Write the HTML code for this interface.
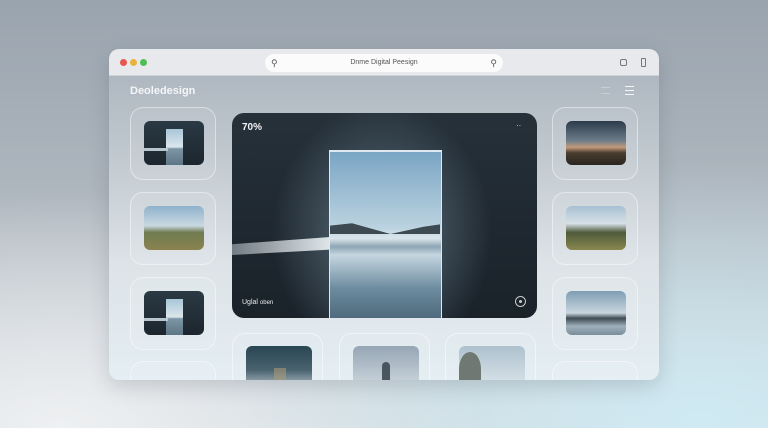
<!DOCTYPE html>
<html><head><style>
*{margin:0;padding:0;box-sizing:border-box}
body{width:768px;height:428px;overflow:hidden;position:relative;font-family:"Liberation Sans",sans-serif;
background:radial-gradient(ellipse 500px 260px at 700px 420px,#cfeaf3 0%,rgba(207,234,243,0) 100%),radial-gradient(ellipse 420px 240px at 60px 430px,#eef0f2 0%,rgba(238,240,242,0) 100%),linear-gradient(180deg,#9aa4ae 0%,#aeb6be 45%,#d4dade 100%);}
.win{position:absolute;left:109px;top:49px;width:550px;height:331px;border-radius:10px;overflow:hidden;box-shadow:0 6px 20px rgba(60,70,80,.2);
background:linear-gradient(180deg,#a9b2bb 0%,#bfc7ce 30%,#dde3e7 65%,#e4eef3 100%);}
.bar{position:absolute;left:0;top:0;width:100%;height:27px;background:#e7e9ec;border-bottom:1px solid #d0d4d8}
.dot{position:absolute;top:10px;width:7px;height:7px;border-radius:50%}
.url{position:absolute;left:156px;top:5px;width:238px;height:18px;border-radius:9px;background:#fbfbfc;font-size:7px;color:#555;text-align:center;line-height:18px}
.logo{position:absolute;left:21px;top:36px;color:#f4f6f8;font-size:11px;font-weight:bold}
.card{position:absolute;width:86px;height:73px;border-radius:13px;border:1.5px solid rgba(255,255,255,.45);background:rgba(255,255,255,.08)}
.th{position:absolute;left:13px;top:13px;width:60px;height:44px;border-radius:6px;overflow:hidden}
.door{position:absolute;left:22px;top:8px;width:17px;height:36px;background:linear-gradient(180deg,#a9c6d8 0%,#dbe6ec 50%,#7c95a5 55%,#5d7686 100%)}
.main{position:absolute;left:123px;top:64px;width:305px;height:205px;border-radius:12px;overflow:hidden;
background:radial-gradient(ellipse 110px 130px at 150px 120px,#5f7482 0%,rgba(40,52,62,0) 100%),linear-gradient(180deg,#26313a 0%,#1f2830 55%,#1a222a 100%)}
.bc{position:absolute;top:284px;width:91px;height:60px;border-radius:13px;border:1.5px solid rgba(255,255,255,.5)}
.bt{position:absolute;left:13px;top:12px;width:66px;height:40px;border-radius:6px;overflow:hidden}
</style></head><body>
<div class="win">
 <div class="bar">
  <div class="dot" style="left:11px;background:#e8574f"></div>
  <div class="dot" style="left:21px;background:#e9b33c"></div>
  <div class="dot" style="left:31px;background:#4fbf55"></div>
  <div class="url"><span style="position:absolute;left:6px;top:0;font-size:9px">⚲</span>Dnme Digital Peesign<span style="position:absolute;right:6px;top:0;font-size:9px">⚲</span></div>
  <div style="position:absolute;left:511px;top:10px;width:7px;height:7px;border:1px solid #777;border-radius:2px"></div>
  <div style="position:absolute;left:532px;top:9px;width:5px;height:9px;border:1px solid #777;border-radius:1px"></div>
 </div>
 <div class="logo">Deoledesign</div>
 <div style="position:absolute;left:492px;top:38px;width:9px;height:7px;border-top:1px solid #c8ced4;border-bottom:1px solid #c8ced4"></div>
 <div style="position:absolute;left:516px;top:37px;width:9px;height:9px;border-top:1.5px solid #f4f6f8;border-bottom:1.5px solid #f4f6f8"><div style="margin-top:2.5px;height:1.5px;background:#f4f6f8"></div></div>

 <div class="card" style="left:21px;top:58px"><div class="th" style="background:linear-gradient(180deg,#2a3944,#1d262e)"><div class="door"></div><div style="position:absolute;left:0;top:27px;width:24px;height:3px;background:#b8c6cf"></div></div></div>
 <div class="card" style="left:21px;top:143px"><div class="th" style="background:linear-gradient(180deg,#8fb2cc 0%,#c9d8e0 45%,#6f7b4f 60%,#8b8350 100%)"></div></div>
 <div class="card" style="left:21px;top:228px"><div class="th" style="background:linear-gradient(180deg,#2a3944,#1d262e)"><div class="door"></div><div style="position:absolute;left:0;top:27px;width:24px;height:3px;background:#b8c6cf"></div></div></div>
 <div class="card" style="left:21px;top:312px"></div>

 <div class="card" style="left:443px;top:58px"><div class="th" style="background:linear-gradient(180deg,#2c3b4b 0%,#6d7d8a 45%,#c29a7a 60%,#4a3d30 72%,#2a2520 100%)"></div></div>
 <div class="card" style="left:443px;top:143px"><div class="th" style="background:linear-gradient(180deg,#a7c0d2 0%,#d6e0e6 40%,#4f5a3a 60%,#8a8850 100%)"></div></div>
 <div class="card" style="left:443px;top:228px"><div class="th" style="background:linear-gradient(180deg,#7f9db3 0%,#c9d6de 50%,#404b52 62%,#9fb0bc 80%,#7a8e9a 100%)"></div></div>
 <div class="card" style="left:443px;top:312px"></div>

 <div class="main">
  <div style="position:absolute;left:0;top:124px;width:98px;height:18px;background:linear-gradient(90deg,rgba(200,210,218,.5),rgba(240,245,248,.9));clip-path:polygon(0 40%,100% 0,100% 70%,0 100%)"></div>
  <div style="position:absolute;left:97px;top:37px;width:113px;height:168px;background:linear-gradient(180deg,#7aa5c4 0%,#bcd3e0 46%,#dbe6ec 52%,#8ea6b4 57%,#c5d6e0 62%,#6d8ca0 82%,#4f6a7c 100%);border:1.5px solid #dfe8ee;border-bottom:none;border-top-width:2px">
   <div style="position:absolute;left:0;top:70px;width:110px;height:12px;background:#3d4a52;clip-path:polygon(0 30%,20% 10%,55% 100%,85% 40%,100% 20%,100% 100%,0 100%)"></div>
  </div>
  <div style="position:absolute;left:10px;top:9px;color:#f2f4f6;font-size:10px;font-weight:bold">70%</div>
  <div style="position:absolute;left:284px;top:8px;color:#ddd;font-size:8px">··</div>
  <div style="position:absolute;left:10px;top:186px;color:#e8ecef;font-size:7px">Uglal <span style="font-size:6px">oben</span></div>
  <div style="position:absolute;left:283px;top:183px;width:11px;height:11px;border:1px solid #ccc;border-radius:50%"><div style="width:3px;height:3px;background:#ccc;border-radius:50%;margin:3px"></div></div>
 </div>

 <div class="bc" style="left:123px"><div class="bt" style="background:linear-gradient(180deg,#294653,#49626e 60%,#a8b8bf)"><div style="position:absolute;left:28px;top:22px;width:12px;height:18px;background:#a89878;opacity:.6"></div></div></div>
 <div class="bc" style="left:230px"><div class="bt" style="background:linear-gradient(180deg,#96a6b4,#cbd5dc)"><div style="position:absolute;left:29px;top:16px;width:8px;height:24px;background:#4a5560;border-radius:4px 4px 0 0"></div></div></div>
 <div class="bc" style="left:336px"><div class="bt" style="background:linear-gradient(180deg,#aec1ce,#d9e3e9)"><div style="position:absolute;left:0;top:6px;width:22px;height:34px;background:#6f7872;border-radius:50% 50% 0 0"></div></div></div>
</div>
</body></html>
